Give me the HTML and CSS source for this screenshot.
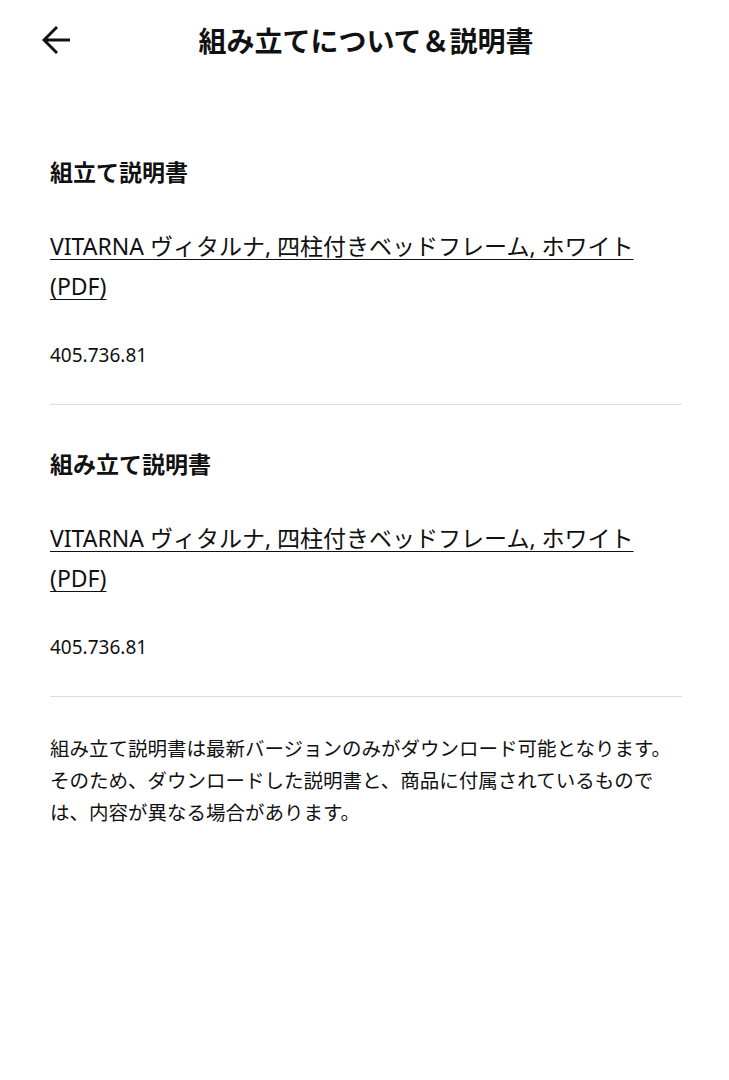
FILE: index.html
```html
<html>

<head>
    <meta http-equiv="Content-Type" content="text/html; charset=utf-8">
    <title>組み立てについて＆説明書</title>

    <link rel="stylesheet" href="styles.css">
</head>

<body>
    <!-- 上部ヘッダー -->
    <div class="header">
        <a class="back" href="#">
            <svg width="30" height="30" viewBox="0 0 30 30">
                <path d="M28 15H3M15 2L2 15l13 13" fill="none" stroke="#111" stroke-width="3" />
            </svg>
        </a>
        <div class="head_title">組み立てについて＆説明書</div>
        <div></div>
    </div>

    <div class="main">
        <!-- 説明書リスト -->
        <div class="sec">
            <div class="sec_title">組立て説明書</div>
            <a class="doc" href="#">VITARNA ヴィタルナ, 四柱付きベッドフレーム, ホワイト (PDF)</a>
            <div class="num">405.736.81</div>
        </div>
        <div class="sec">
            <div class="sec_title">組み立て説明書</div>
            <a class="doc" href="#">VITARNA ヴィタルナ, 四柱付きベッドフレーム, ホワイト (PDF)</a>
            <div class="num">405.736.81</div>
        </div>

        <p class="note">組み立て説明書は最新バージョンのみがダウンロード可能となります。そのため、ダウンロードした説明書と、商品に付属されているものでは、内容が異なる場合があります。</p>
    </div>
</body>

</html>
```

FILE: styles.css
```css
body {
    margin: 0;
    background: #fff;
    color: #111;
    font-family: "Noto Sans", "Noto Sans CJK JP", sans-serif;
}

.header {
    height: 80px;
    display: grid;
    grid-template-columns: 1fr auto 1fr;
    align-items: center;
}

.back {
    display: flex;
    padding-left: 42px;
}

.head_title {
    font-size: 28px;
    font-weight: 700;
    padding-left: 3px;
}

.main {
    padding: 33px 47px 0 50px;
}

.sec {
    padding: 43px 0 35px;
    border-bottom: 1px solid #dedede;
}

.sec_title {
    font-size: 23px;
    font-weight: 700;
    line-height: 32px;
}

.doc {
    display: block;
    max-width: 620px;
    margin-top: 38px;
    font-size: 23px;
    line-height: 40px;
    color: #111;
    text-decoration: underline;
    text-decoration-thickness: 1px;
    text-underline-offset: 4px;
}

.num {
    margin-top: 35px;
    font-size: 19px;
    line-height: 28px;
}

.note {
    margin: 36px 0 0;
    font-size: 19.5px;
    line-height: 32px;
}
```
